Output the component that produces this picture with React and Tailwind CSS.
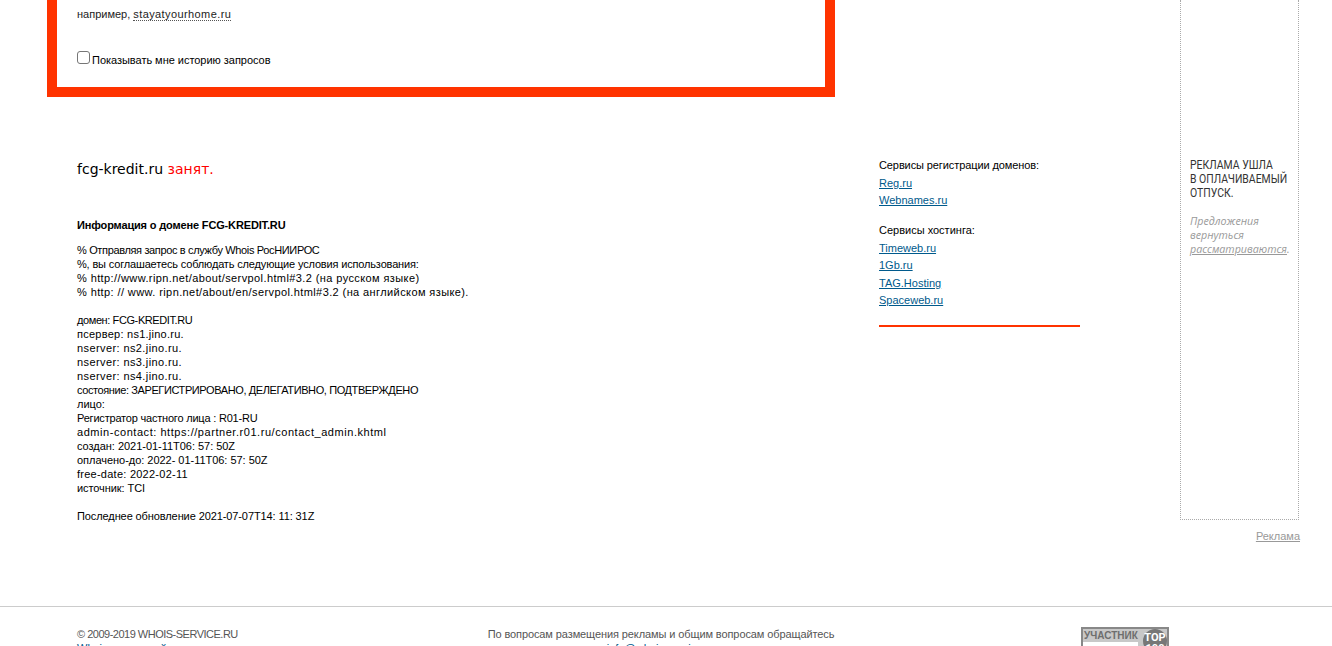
const F = "font-['Liberation_Sans',sans-serif]";

const lines1 = [
  ["% Отправляя запрос в службу Whois РосНИИРОС", "tracking-[-0.35px]"],
  ["%, вы соглашаетесь соблюдать следующие условия использования:", "tracking-[-0.16px]"],
  ["% http://www.ripn.net/about/servpol.html#3.2 (на русском языке)", "tracking-[0.4px]"],
  ["% http: // www. ripn.net/about/en/servpol.html#3.2 (на английском языке).", "tracking-[0.4px]"],
  ["", ""],
  ["домен: FCG-KREDIT.RU", "tracking-[-0.4px]"],
  ["пcервер: ns1.jino.ru.", "tracking-[0.25px]"],
  ["nserver: ns2.jino.ru.", "tracking-[0.4px]"],
  ["nserver: ns3.jino.ru.", "tracking-[0.4px]"],
  ["nserver: ns4.jino.ru.", "tracking-[0.4px]"],
  ["состояние: ЗАРЕГИСТРИРОВАНО, ДЕЛЕГАТИВНО, ПОДТВЕРЖДЕНО", "tracking-[-0.4px]"],
  ["лицо:", "tracking-[0px]"],
  ["Регистратор частного лица : R01-RU", "tracking-[-0.2px]"],
  ["admin-contact: https://partner.r01.ru/contact_admin.khtml", "tracking-[0.55px]"],
  ["создан: 2021-01-11T06: 57: 50Z", "tracking-[-0.03px]"],
  ["оплачено-до: 2022- 01-11T06: 57: 50Z", "tracking-[-0.03px]"],
  ["free-date: 2022-02-11", "tracking-[0.25px]"],
  ["источник: TCI", "tracking-[-0.08px]"],
  ["", ""],
  ["Последнее обновление 2021-07-07T14: 11: 31Z", "tracking-[-0.1px]"],
];

function SideLink({ children }) {
  return <a className="block h-[17.4px] leading-[17px] text-[#005a8c] underline">{children}</a>;
}

export default function App() {
  return (
    <div className={`h-[646px] w-[1332px] overflow-hidden bg-white text-[11px] text-black ${F}`}>
      <div className="flex h-[607px] border-b border-[#cccccc]">
        <div className="w-[1180px] pl-[47px]">
          <div className="h-[97px] w-[788px] border-x-[10px] border-b-[10px] border-[#ff3300] pl-5">
            <p className="pt-[7px] leading-[14px] text-[#222222]">
              например, <span className="border-b border-dotted border-[#555555] tracking-[0.4px]">stayatyourhome.ru</span>
            </p>
            <label className="mt-[29px] flex items-start">
              <input type="checkbox" className="mt-[1px] h-[13px] w-[13px] appearance-none rounded-[3px] border border-[#767676] bg-white" />
              <span className="ml-[2px] mt-[3px] leading-[14px] tracking-[-0.03px]">Показывать мне историю запросов</span>
            </label>
          </div>
          <div className="flex">
            <div className="w-[832px] pl-[30px]">
              <p className="mt-[63px] h-[18px] font-['DejaVu_Sans',sans-serif] text-[14px] leading-[18px]">
                fcg-kredit.ru <span className="text-[#ff0000]">занят.</span>
              </p>
              <h3 className="mt-[40px] text-[11px] font-bold leading-[14px] tracking-[-0.15px]">Информация о домене FCG-KREDIT.RU</h3>
              <div className="mt-[11px]">
                {lines1.map(([l, t], i) => (
                  <div key={i} className={`h-[14px] whitespace-pre leading-[14px] ${t}`}>{l}</div>
                ))}
              </div>
            </div>
            <div className="w-[201px] pt-[61px]">
              <p className="h-[14px] leading-[14px] tracking-[-0.1px]">Сервисы регистрации доменов:</p>
              <div className="mt-[3px]">
                <SideLink>Reg.ru</SideLink>
                <SideLink>Webnames.ru</SideLink>
              </div>
              <p className="mt-[13px] h-[14px] leading-[14px]">Сервисы хостинга:</p>
              <div className="mt-[3px]">
                <SideLink>Timeweb.ru</SideLink>
                <SideLink>1Gb.ru</SideLink>
                <SideLink>TAG.Hosting</SideLink>
                <SideLink>Spaceweb.ru</SideLink>
              </div>
              <div className="mt-[16px] h-[2px] bg-[#ff3300]" />
            </div>
          </div>
        </div>
        <div className="w-[120px]">
          <div className="mr-[1px] h-[520px] border-x border-b border-dotted border-[#aaaaaa] pl-[9px] pt-[158px]">
            <p className="origin-left scale-x-[0.87] whitespace-nowrap font-['Roboto',sans-serif] text-[12px] leading-[14px] text-[#333333]">
              РЕКЛАМА УШЛА<br />В ОПЛАЧИВАЕМЫЙ<br />ОТПУСК.
            </p>
            <p className="mt-[14px] whitespace-nowrap font-['Open_Sans',sans-serif] text-[10.7px] italic leading-[14px] text-[#999999]">
              Предложения<br />вернуться<br /><span className="underline">рассматриваются</span>.
            </p>
          </div>
          <div className="mt-[9px] text-right leading-[14px]">
            <a className="text-[#999999] underline">Реклама</a>
          </div>
        </div>
      </div>
      <div className="flex pt-[20px] text-[#555555]">
        <div className="w-[410px] pl-[77px] leading-[14px]">
          <p className="tracking-[-0.5px]">© 2009-2019 WHOIS-SERVICE.RU</p>
          <p className="text-[#005a8c]">Whois-сервисный</p>
        </div>
        <div className="w-[502px] text-center leading-[14px]">
          <p className="tracking-[-0.1px]">По вопросам размещения рекламы и общим вопросам обращайтесь</p>
          <p className="text-[#005a8c]">info@whois-service.ru</p>
        </div>
        <div className="relative ml-[169px] h-[31px] w-[88px] overflow-hidden border-2 border-[#888888] bg-[#c8c8c8]">
          <span className="block pl-[1px] text-[10px] font-bold leading-[13px] text-[#6e6e6e]">УЧАСТНИК</span>
          <div className="h-[12px] w-[55px] bg-white" />
          <div className="absolute left-[60px] top-[0px] h-[24px] w-[24px] rounded-full bg-[#777777] pt-[3px] text-center font-['Roboto',sans-serif] text-[11px] font-bold leading-[11px] text-white">
            TOP<br />100
          </div>
        </div>
      </div>
    </div>
  );
}
